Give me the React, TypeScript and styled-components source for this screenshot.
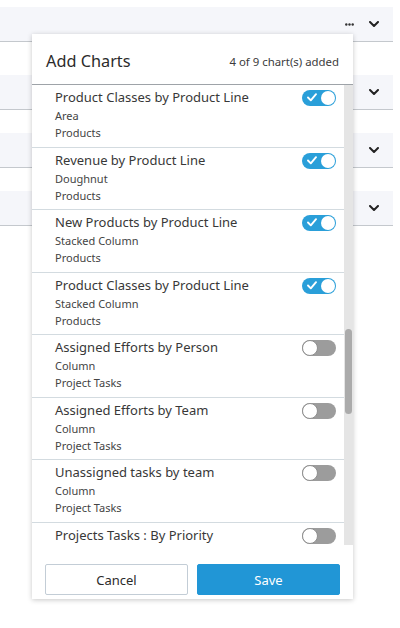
import React from "react";
import styled, { createGlobalStyle } from "styled-components";

const GlobalStyle = createGlobalStyle`
  html, body { margin: 0; padding: 0; background: #ffffff; }
  body { font-family: "Noto Sans", "Open Sans", sans-serif; color: #3c3c3c; }
  * { box-sizing: border-box; }
`;

const Page = styled.div`
  position: relative;
  width: 400px;
  height: 628px;
  padding: 7px 7px 0 0;
  overflow: hidden;
`;

const Band = styled.div<{ $gap: number }>`
  height: 35px;
  margin-bottom: ${(p) => p.$gap}px;
  background: #f5f6fa;
  border-bottom: 1px solid #c4c8cd;
  display: flex;
  align-items: center;
  justify-content: flex-end;
  gap: 15px;
  padding-right: 14px;
`;

const Dots = () => (
  <svg width="9" height="3" viewBox="0 0 9 3">
    <circle cx="1.3" cy="1.5" r="1.2" fill="#333" />
    <circle cx="4.5" cy="1.5" r="1.2" fill="#333" />
    <circle cx="7.7" cy="1.5" r="1.2" fill="#333" />
  </svg>
);

const Chevron = () => (
  <svg width="10" height="6" viewBox="0 0 10 6">
    <path d="M1 1 L5 5 L9 1" fill="none" stroke="#222" strokeWidth="2" strokeLinecap="round" strokeLinejoin="round" />
  </svg>
);

const Modal = styled.div`
  position: absolute;
  top: 34px;
  left: 32px;
  width: 321px;
  height: 565px;
  background: #fff;
  box-shadow: 0 1px 5px rgba(0, 0, 0, 0.22);
  display: flex;
  flex-direction: column;
`;

const Header = styled.div`
  height: 51px;
  flex: none;
  display: flex;
  align-items: center;
  justify-content: space-between;
  padding: 4px 14px 0;
  border-bottom: 1px solid #9ea3a8;
`;

const Title = styled.h2`
  margin: 0;
  font-size: 16.3px;
  font-weight: 400;
  color: #2b2b2b;
`;

const Count = styled.span`
  font-size: 11.4px;
  color: #3c3c3c;
`;

const Body = styled.div`
  height: 460px;
  flex: none;
  display: flex;
  overflow: hidden;
`;

const List = styled.div`
  flex: 1;
  overflow: hidden;
`;

const Item = styled.div`
  height: 62.5px;
  border-bottom: 1px solid #d3dbe0;
  display: flex;
  justify-content: space-between;
  padding: 3px 8px 0 23px;
`;

const Texts = styled.div`
  display: flex;
  flex-direction: column;
`;

const ItemTitle = styled.div`
  font-size: 13px;
  line-height: 19px;
  color: #383838;
`;

const Sub = styled.div`
  font-size: 11px;
  line-height: 17px;
  color: #444;
`;

const Track = styled.div`
  width: 9px;
  flex: none;
  background: #e5e5e5;
  padding: 0 1px;
`;

const Thumb = styled.div`
  width: 7px;
  height: 85px;
  border-radius: 4px;
  background: #ababab;
`;

const Switch = styled.div<{ $on: boolean }>`
  position: relative;
  width: 34px;
  height: 16px;
  margin-top: 2px;
  border-radius: 8px;
  background: ${(p) => (p.$on ? "#2a9fd9" : "#9c9c9c")};
  flex: none;
`;

const Knob = styled.span<{ $on: boolean }>`
  position: absolute;
  top: ${(p) => (p.$on ? 1 : 0)}px;
  left: ${(p) => (p.$on ? 19 : 0)}px;
  width: ${(p) => (p.$on ? 14 : 16)}px;
  height: ${(p) => (p.$on ? 14 : 16)}px;
  border-radius: 50%;
  background: #fff;
  border: ${(p) => (p.$on ? "none" : "1px solid #8f8f8f")};
`;

const Check = styled.svg`
  position: absolute;
  left: 5px;
  top: 3px;
`;

const Footer = styled.div`
  flex: 1;
  display: flex;
  gap: 9px;
  padding: 19px 13px 4px 13px;
`;

const Button = styled.button<{ $primary?: boolean }>`
  flex: 1;
  height: 31px;
  border-radius: 2px;
  font-family: "Noto Sans", "Open Sans", sans-serif;
  font-size: 13px;
  cursor: pointer;
  border: 1px solid ${(p) => (p.$primary ? "#2196d6" : "#c3cdd6")};
  background: ${(p) => (p.$primary ? "#2196d6" : "#fff")};
  color: ${(p) => (p.$primary ? "#fff" : "#2b2b2b")};
`;

type Chart = { t: string; a?: string; b?: string; on: boolean };

const charts: Chart[] = [
  { t: "Product Classes by Product Line", a: "Area", b: "Products", on: true },
  { t: "Revenue by Product Line", a: "Doughnut", b: "Products", on: true },
  { t: "New Products by Product Line", a: "Stacked Column", b: "Products", on: true },
  { t: "Product Classes by Product Line", a: "Stacked Column", b: "Products", on: true },
  { t: "Assigned Efforts by Person", a: "Column", b: "Project Tasks", on: false },
  { t: "Assigned Efforts by Team", a: "Column", b: "Project Tasks", on: false },
  { t: "Unassigned tasks by team", a: "Column", b: "Project Tasks", on: false },
  { t: "Projects Tasks : By Priority", on: false },
];

const Toggle = ({ on }: { on: boolean }) => (
  <Switch $on={on}>
    {on && (
      <Check width="10" height="9" viewBox="0 0 10 9">
        <path d="M1 4.5 L3.8 7.3 L9 1.2" fill="none" stroke="#fff" strokeWidth="1.9" strokeLinecap="round" strokeLinejoin="round" />
      </Check>
    )}
    <Knob $on={on} />
  </Switch>
);

export default function App() {
  return (
    <>
      <GlobalStyle />
      <Page>
        <Band $gap={33}>
          <Dots />
          <Chevron />
        </Band>
        <Band $gap={23}>
          <Chevron />
        </Band>
        <Band $gap={23}>
          <Chevron />
        </Band>
        <Band $gap={23}>
          <Chevron />
        </Band>

        <Modal>
          <Header>
            <Title>Add Charts</Title>
            <Count>4 of 9 chart(s) added</Count>
          </Header>
          <Body>
            <List>
              {charts.map((c, i) => (
                <Item key={i}>
                  <Texts>
                    <ItemTitle>{c.t}</ItemTitle>
                    {c.a && <Sub>{c.a}</Sub>}
                    {c.b && <Sub>{c.b}</Sub>}
                  </Texts>
                  <Toggle on={c.on} />
                </Item>
              ))}
            </List>
            <Track>
              <Thumb style={{ marginTop: 244 }} />
            </Track>
          </Body>
          <Footer>
            <Button>Cancel</Button>
            <Button $primary>Save</Button>
          </Footer>
        </Modal>
      </Page>
    </>
  );
}
